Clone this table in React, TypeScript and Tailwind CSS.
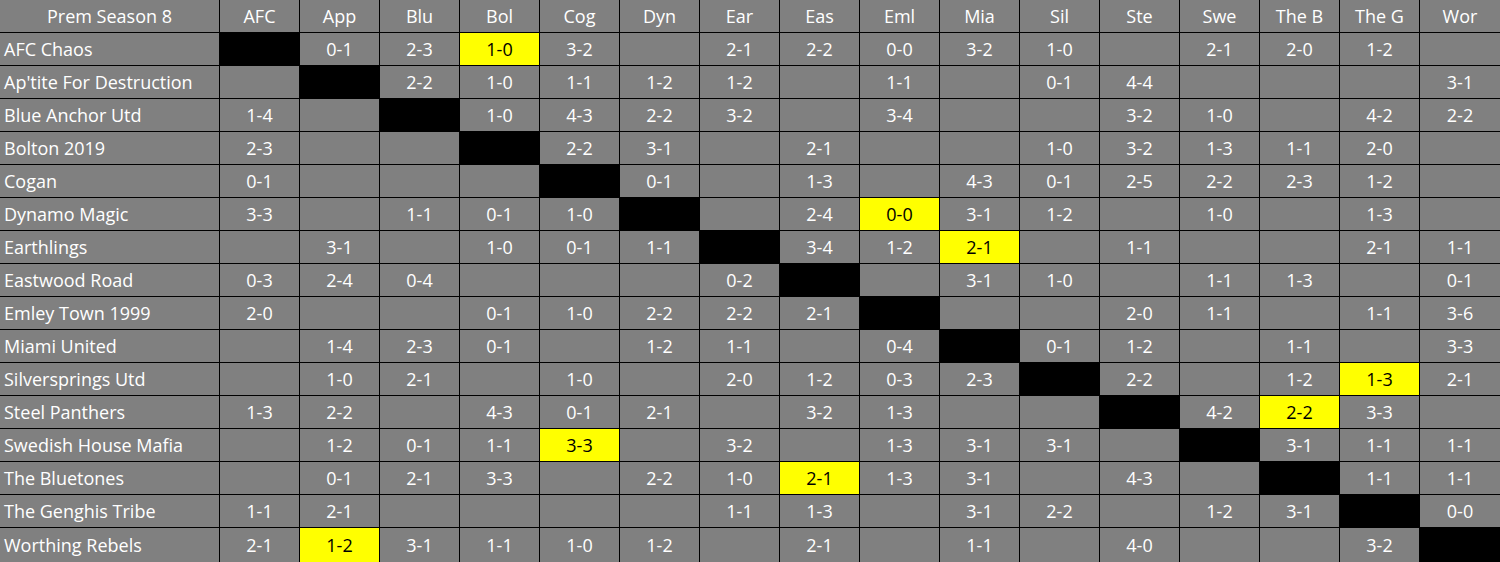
import React from "react";

const cols = ["AFC", "App", "Blu", "Bol", "Cog", "Dyn", "Ear", "Eas", "Eml", "Mia", "Sil", "Ste", "Swe", "The B", "The G", "Wor"];

// "*" = highlighted (yellow) result, "#" = team plays itself
const rows: [string, string[]][] = [
  ["AFC Chaos", ["#", "0-1", "2-3", "*1-0", "3-2", "", "2-1", "2-2", "0-0", "3-2", "1-0", "", "2-1", "2-0", "1-2", ""]],
  ["Ap'tite For Destruction", ["", "#", "2-2", "1-0", "1-1", "1-2", "1-2", "", "1-1", "", "0-1", "4-4", "", "", "", "3-1"]],
  ["Blue Anchor Utd", ["1-4", "", "#", "1-0", "4-3", "2-2", "3-2", "", "3-4", "", "", "3-2", "1-0", "", "4-2", "2-2"]],
  ["Bolton 2019", ["2-3", "", "", "#", "2-2", "3-1", "", "2-1", "", "", "1-0", "3-2", "1-3", "1-1", "2-0", ""]],
  ["Cogan", ["0-1", "", "", "", "#", "0-1", "", "1-3", "", "4-3", "0-1", "2-5", "2-2", "2-3", "1-2", ""]],
  ["Dynamo Magic", ["3-3", "", "1-1", "0-1", "1-0", "#", "", "2-4", "*0-0", "3-1", "1-2", "", "1-0", "", "1-3", ""]],
  ["Earthlings", ["", "3-1", "", "1-0", "0-1", "1-1", "#", "3-4", "1-2", "*2-1", "", "1-1", "", "", "2-1", "1-1"]],
  ["Eastwood Road", ["0-3", "2-4", "0-4", "", "", "", "0-2", "#", "", "3-1", "1-0", "", "1-1", "1-3", "", "0-1"]],
  ["Emley Town 1999", ["2-0", "", "", "0-1", "1-0", "2-2", "2-2", "2-1", "#", "", "", "2-0", "1-1", "", "1-1", "3-6"]],
  ["Miami United", ["", "1-4", "2-3", "0-1", "", "1-2", "1-1", "", "0-4", "#", "0-1", "1-2", "", "1-1", "", "3-3"]],
  ["Silversprings Utd", ["", "1-0", "2-1", "", "1-0", "", "2-0", "1-2", "0-3", "2-3", "#", "2-2", "", "1-2", "*1-3", "2-1"]],
  ["Steel Panthers", ["1-3", "2-2", "", "4-3", "0-1", "2-1", "", "3-2", "1-3", "", "", "#", "4-2", "*2-2", "3-3", ""]],
  ["Swedish House Mafia", ["", "1-2", "0-1", "1-1", "*3-3", "", "3-2", "", "1-3", "3-1", "3-1", "", "#", "3-1", "1-1", "1-1"]],
  ["The Bluetones", ["", "0-1", "2-1", "3-3", "", "2-2", "1-0", "*2-1", "1-3", "3-1", "", "4-3", "", "#", "1-1", "1-1"]],
  ["The Genghis Tribe", ["1-1", "2-1", "", "", "", "", "1-1", "1-3", "", "3-1", "2-2", "", "1-2", "3-1", "#", "0-0"]],
  ["Worthing Rebels", ["2-1", "*1-2", "3-1", "1-1", "1-0", "1-2", "", "2-1", "", "1-1", "", "4-0", "", "", "3-2", "#"]],
];

const Cell = ({ value }: { value: string }) => {
  if (value === "#") return <div className="bg-black" />;
  if (value.startsWith("*"))
    return <div className="flex items-center justify-center bg-[#ffff00] pt-px text-black">{value.slice(1)}</div>;
  return <div className="flex items-center justify-center bg-[#808080] pt-px">{value}</div>;
};

export default function App() {
  return (
    <div
      className="grid h-[562px] w-[1500px] grid-cols-[219px_repeat(15,79px)_80px] grid-rows-[repeat(16,32px)_1fr] gap-px bg-black text-[18px] text-white"
      style={{ fontFamily: '"Open Sans", "Noto Sans", sans-serif' }}
    >
      <div className="flex items-center justify-center bg-[#808080] pt-px">Prem Season 8</div>
      {cols.map((c) => (
        <div key={c} className="flex items-center justify-center bg-[#808080] pt-px">
          {c}
        </div>
      ))}
      {rows.map(([team, results]) => (
        <React.Fragment key={team}>
          <div className="flex items-center bg-[#808080] pl-1 pt-px whitespace-nowrap">{team}</div>
          {results.map((r, i) => (
            <Cell key={i} value={r} />
          ))}
        </React.Fragment>
      ))}
    </div>
  );
}
